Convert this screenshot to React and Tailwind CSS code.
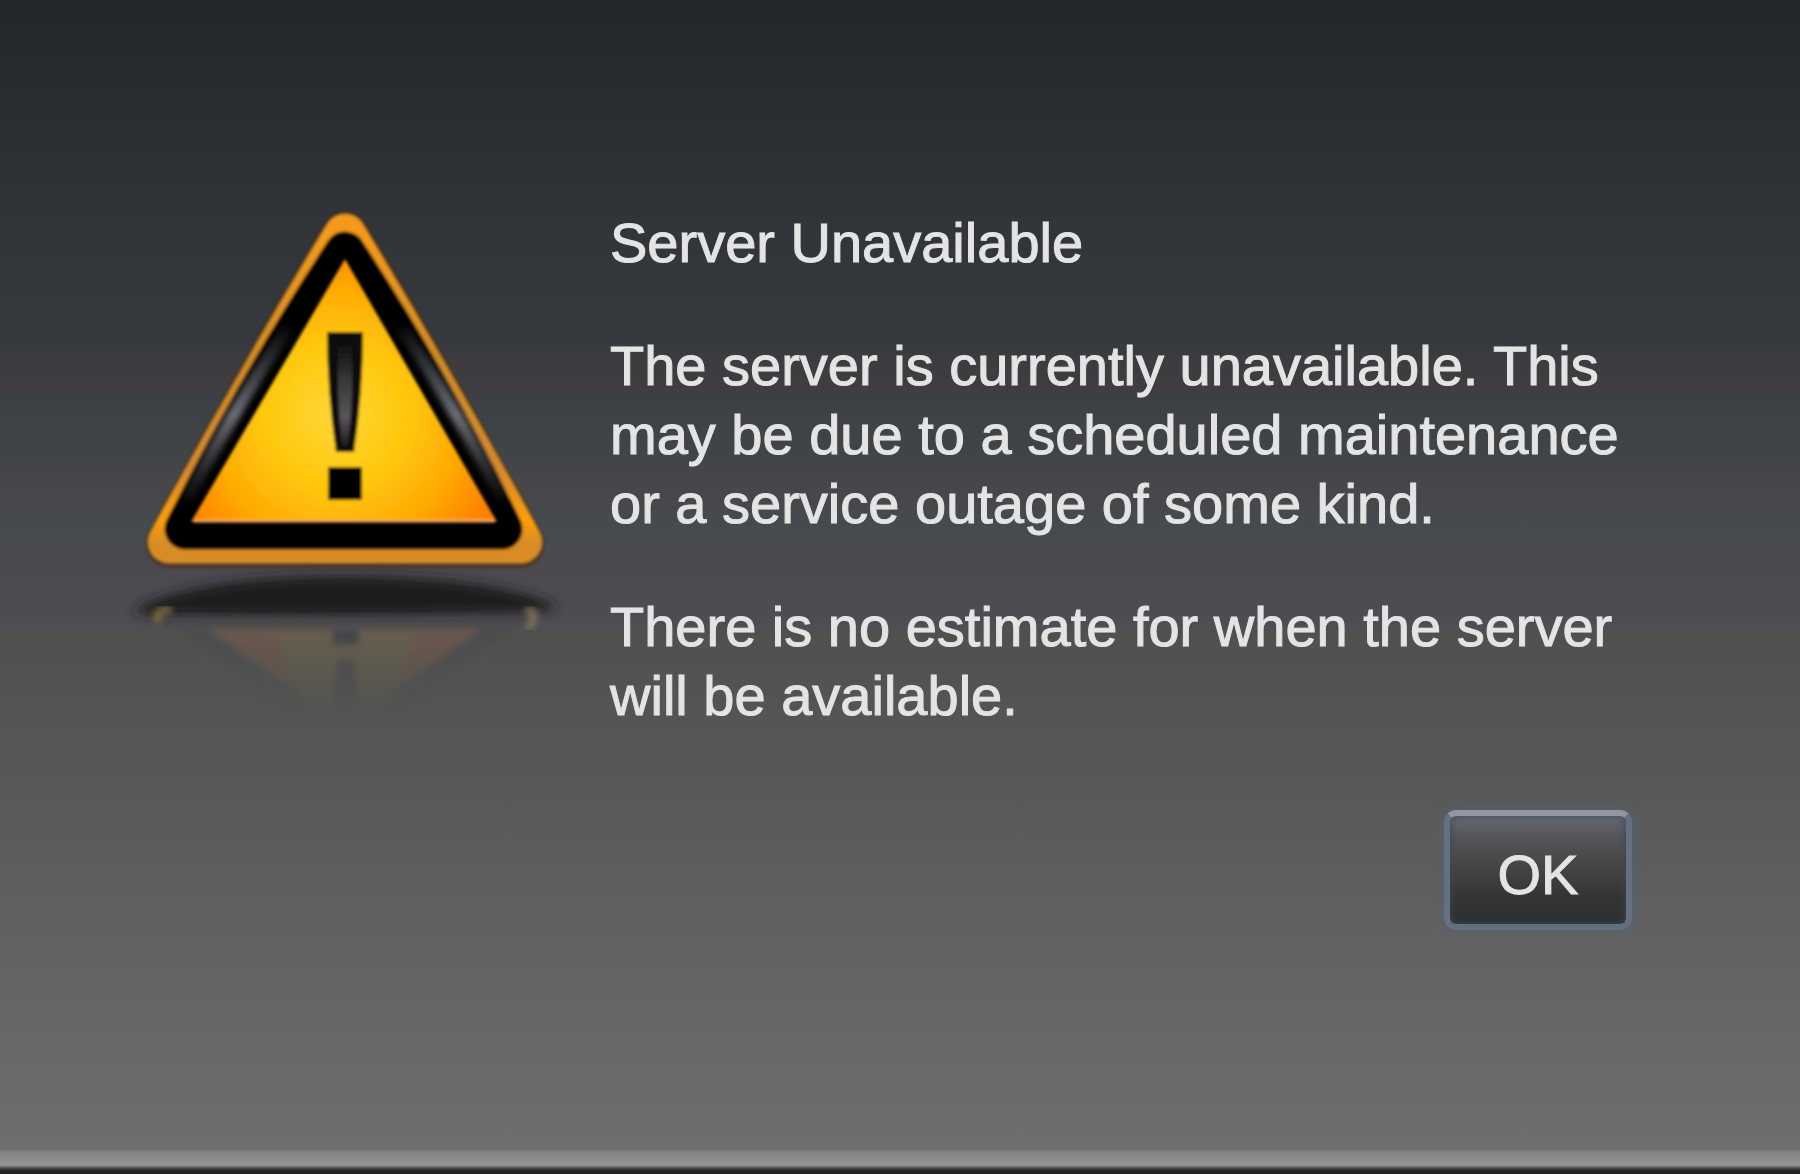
import React, { useState } from "react";

function WarningIcon() {
  return (
    <svg className="w-full" viewBox="120 200 450 550" role="img" aria-label="Warning">
      <defs>
        <linearGradient id="rim" x1="0" y1="0" x2="0" y2="1">
          <stop offset="0" stopColor="#f39a1c" />
          <stop offset="0.4" stopColor="#d08a24" />
          <stop offset="0.75" stopColor="#d9882a" />
          <stop offset="0.93" stopColor="#fb9d0c" />
          <stop offset="1" stopColor="#d98c28" />
        </linearGradient>
        <radialGradient id="face" gradientUnits="userSpaceOnUse" cx="335" cy="415" r="175">
          <stop offset="0" stopColor="#ffd638" />
          <stop offset="0.4" stopColor="#ffc80c" />
          <stop offset="0.72" stopColor="#ffab04" />
          <stop offset="1" stopColor="#ff8205" />
        </radialGradient>
        <linearGradient id="gloss" gradientUnits="userSpaceOnUse" x1="0" y1="320" x2="0" y2="510">
          <stop offset="0" stopColor="#6c6f76" stopOpacity="0" />
          <stop offset="0.5" stopColor="#6c6f76" />
          <stop offset="1" stopColor="#56595f" stopOpacity="0" />
        </linearGradient>
        <linearGradient id="stem" gradientUnits="userSpaceOnUse" x1="0" y1="340" x2="0" y2="450">
          <stop offset="0" stopColor="#0a0a0a" />
          <stop offset="0.35" stopColor="#343733" />
          <stop offset="0.7" stopColor="#58565c" />
          <stop offset="1" stopColor="#141414" />
        </linearGradient>
        <linearGradient id="fade" gradientUnits="userSpaceOnUse" x1="0" y1="625" x2="0" y2="715">
          <stop offset="0" stopColor="#fff" />
          <stop offset="0.5" stopColor="#fff" stopOpacity="0.5" />
          <stop offset="1" stopColor="#fff" stopOpacity="0" />
        </linearGradient>
        <mask id="fadeMask" maskUnits="userSpaceOnUse" x="120" y="590" width="450" height="160">
          <rect x="120" y="590" width="450" height="160" fill="url(#fade)" />
        </mask>
        <filter id="soft" x="-20%" y="-20%" width="140%" height="140%">
          <feGaussianBlur stdDeviation="1.5" />
        </filter>
        <filter id="softer" x="-20%" y="-20%" width="140%" height="140%">
          <feGaussianBlur stdDeviation="3" />
        </filter>
        <filter id="shadow" x="-20%" y="-50%" width="140%" height="200%">
          <feGaussianBlur stdDeviation="6" />
        </filter>
      </defs>

      {/* ground shadow */}
      <path
        d="M132 611 Q190 577 345 576 Q500 577 558 607 Q545 613 510 613 Q345 617 180 615 Q150 617 132 611Z"
        fill="#1c1c1c"
        filter="url(#shadow)"
      />

      {/* reflection */}
      <g mask="url(#fadeMask)" filter="url(#softer)">
        <path d="M165 618 L525 618 L400 715 L290 715Z" fill="#484a4c" opacity="0.5" />
        <path d="M208 629 L482 629 L345 725Z" fill="#6c594d" />
        <path d="M275 634 L415 634 L385 705 L305 705Z" fill="#66654f" opacity="0.6" />
        <rect x="332" y="630" width="27" height="15" fill="#434449" />
        <path d="M337 659 L354 659 L360 712 L330 712Z" fill="#4b4b4b" />
      </g>
      <g filter="url(#softer)" fill="none" strokeWidth="9" strokeLinecap="round">
        <path d="M168 610 Q155 611 158 619" stroke="#86723c" opacity="0.8" />
        <path d="M529 611 Q538 612 530 626" stroke="#807757" opacity="0.8" />
      </g>

      {/* sign */}
      <g filter="url(#soft)">
        <path
          d="M345 235 Q253 387 169 544 L521 544 Q437 387 345 235Z"
          fill="#49310d"
          stroke="#49310d"
          strokeWidth="47"
          strokeLinejoin="round"
          opacity="0.7"
        />
        <path
          d="M345 235 Q253 387 169 542 L521 542 Q437 387 345 235Z"
          fill="url(#rim)"
          stroke="url(#rim)"
          strokeWidth="42"
          strokeLinejoin="round"
        />
        <path
          d="M345 252 Q258 385 185 529 L502 529 Q432 385 345 252Z"
          fill="#020202"
          stroke="#020202"
          strokeWidth="41"
          strokeLinejoin="round"
        />
      </g>
      <g filter="url(#softer)" stroke="url(#gloss)" strokeWidth="13" fill="none">
        <path d="M288 327 Q240 400 186 500" />
        <path d="M402 327 Q450 400 504 500" />
      </g>
      <g filter="url(#soft)">
        <path d="M345 259 L191 522 L497 522Z" fill="url(#face)" />
        <path d="M194 521 L494 521" stroke="#f8aa55" strokeWidth="3" />
        <path d="M327 332 L363 332 Q363 390 354 452 L336 452 Q327 390 327 332Z" fill="#070707" />
        <path d="M338 340 L352 340 Q354 390 348 446 L342 446 Q336 390 338 340Z" fill="url(#stem)" />
        <rect x="328" y="467" width="34" height="33" fill="#060606" />
      </g>
    </svg>
  );
}

function App() {
  const [open, setOpen] = useState(true);

  return (
    <div className="min-h-screen flex flex-col bg-[linear-gradient(to_bottom,#23272b_0%,#282c31_7%,#313439_19%,#36393d_29%,#3f3c40_31%,#3f3d41_33%,#3d4044_34%,#414548_39%,#48464a_41%,#48474b_43%,#454a4e_44%,#464b4e_46%,#4b494f_47%,#4f4d54_53%,#50504f_54%,#555555_62%,#5c5c5c_72%,#6e6e6e_97%)] font-['Liberation_Sans',Arial,sans-serif] text-[#e4e4e4] [-webkit-text-stroke:1px_#e4e4e4]">
      {open && (
        <main role="alertdialog" aria-labelledby="title" aria-describedby="message" className="grow pl-[120px] pr-[168px] pt-[200px]">
          <div className="flex items-start">
            <div className="w-[450px] shrink-0">
              <WarningIcon />
            </div>
            <div className="grow pl-10 pt-2 text-[56px] leading-[69px]">
              <h1 id="title">Server Unavailable</h1>
              <div id="message" className="flex flex-col gap-[54px] pt-[54px]">
                <p>
                  The server is currently unavailable. This may be due to a scheduled maintenance or a service outage of some kind.
                </p>
                <p>There is no estimate for when the server will be available.</p>
              </div>
            </div>
          </div>
          <div className="flex justify-end pt-[60px]">
            <button
              onClick={() => setOpen(false)}
              className="w-[188px] h-[120px] pt-2 rounded-xl border-[6px] border-t-[#9496a2] border-x-[#657180] border-b-[#5f7081] bg-[linear-gradient(to_bottom,#686b77_0%,#55565a_18%,#484644_45%,#353433_75%,#2b2d31_100%)] text-[56px] leading-[69px] shadow-[0_0_8px_#52647a,inset_0_0_8px_#3c4856]"
            >
              OK
            </button>
          </div>
        </main>
      )}
      {!open && <div className="grow" />}
      <footer className="h-6 bg-[linear-gradient(to_bottom,#767676_0px,#868686_3px,#8c8c8c_10px,#949494_15px,#666666_17px,#2c2a2b_20px,#222021_24px)]" />
    </div>
  );
}

export default App;
